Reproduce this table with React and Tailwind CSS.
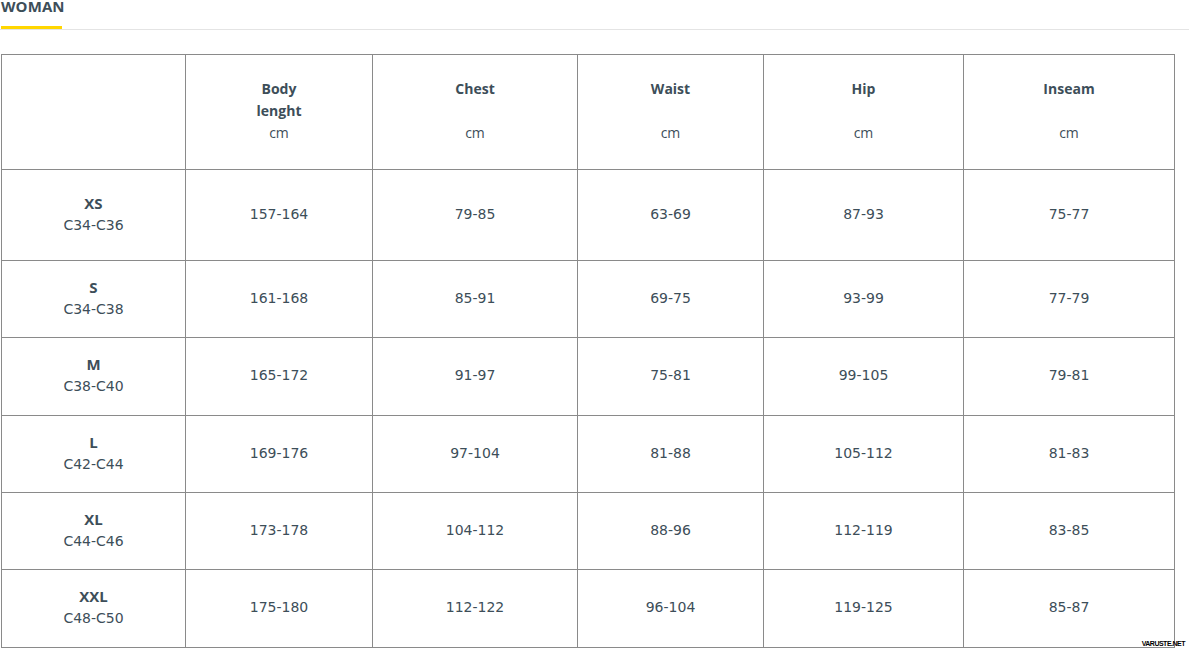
const headers = [
  { lines: ['Body', 'lenght'], unit: 'cm' },
  { lines: ['Chest', ''], unit: 'cm' },
  { lines: ['Waist', ''], unit: 'cm' },
  { lines: ['Hip', ''], unit: 'cm' },
  { lines: ['Inseam', ''], unit: 'cm' },
];

const rows = [
  { size: 'XS', eu: 'C34-C36', h: 'h-[91px]', values: ['157-164', '79-85', '63-69', '87-93', '75-77'] },
  { size: 'S', eu: 'C34-C38', h: 'h-[77px]', values: ['161-168', '85-91', '69-75', '93-99', '77-79'] },
  { size: 'M', eu: 'C38-C40', h: 'h-[78px]', values: ['165-172', '91-97', '75-81', '99-105', '79-81'] },
  { size: 'L', eu: 'C42-C44', h: 'h-[77px]', values: ['169-176', '97-104', '81-88', '105-112', '81-83'] },
  { size: 'XL', eu: 'C44-C46', h: 'h-[77px]', values: ['173-178', '104-112', '88-96', '112-119', '83-85'] },
  { size: 'XXL', eu: 'C48-C50', h: 'h-[78px]', values: ['175-180', '112-122', '96-104', '119-125', '85-87'] },
];

const App = () => {
  return (
    <div className="relative h-[648px] overflow-hidden bg-white text-[#3d4e59]">
      {/* Tab bar */}
      <div className="flow-root h-[30px] border-b border-[#e4e4e4]">
        <div className="flow-root ml-[1px] h-[29px] w-[61px] border-b-[3px] border-[#ffd600]">
          <div className="-mt-[1px] font-['Open_Sans',sans-serif] text-[15px] font-bold leading-[15px] tracking-[0.1px]">
            WOMAN
          </div>
        </div>
      </div>

      {/* Size table */}
      <table className="ml-[1px] mt-6 w-[1173px] table-fixed border-collapse text-center">
        <colgroup>
          <col className="w-[184px]" />
          <col className="w-[187px]" />
          <col className="w-[205px]" />
          <col className="w-[186px]" />
          <col className="w-[200px]" />
          <col className="w-[211px]" />
        </colgroup>
        <thead>
          <tr className="h-[115px]">
            <th className="border border-[#8a8a8a]"></th>
            {headers.map((h, i) => (
              <th key={i} className="border border-[#8a8a8a] pb-[3px] align-middle font-['Open_Sans',sans-serif] text-[14px] leading-[22px]">
                <div className="font-bold">{h.lines[0]}</div>
                <div className="h-[22px] font-bold">{h.lines[1]}</div>
                <div className="font-normal">{h.unit}</div>
              </th>
            ))}
          </tr>
        </thead>
        <tbody>
          {rows.map((r) => (
            <tr key={r.size} className={r.h}>
              <td className="border border-[#8a8a8a] pb-[3px] align-middle leading-[22px]">
                <div className="font-['Open_Sans',sans-serif] text-[15px] font-bold">{r.size}</div>
                <div className="font-['DejaVu_Sans',sans-serif] text-[14px]">{r.eu}</div>
              </td>
              {r.values.map((v, i) => (
                <td key={i} className="border border-[#8a8a8a] pb-[2px] align-middle font-['DejaVu_Sans',sans-serif] text-[14px]">
                  {v}
                </td>
              ))}
            </tr>
          ))}
        </tbody>
      </table>

      {/* Watermark */}
      <div className="absolute bottom-[1px] right-[4px] font-['Liberation_Sans',sans-serif] text-[7px] font-bold leading-[7px] tracking-[-0.5px] text-black">
        VARUSTE.NET
      </div>
    </div>
  );
};

export default App;
